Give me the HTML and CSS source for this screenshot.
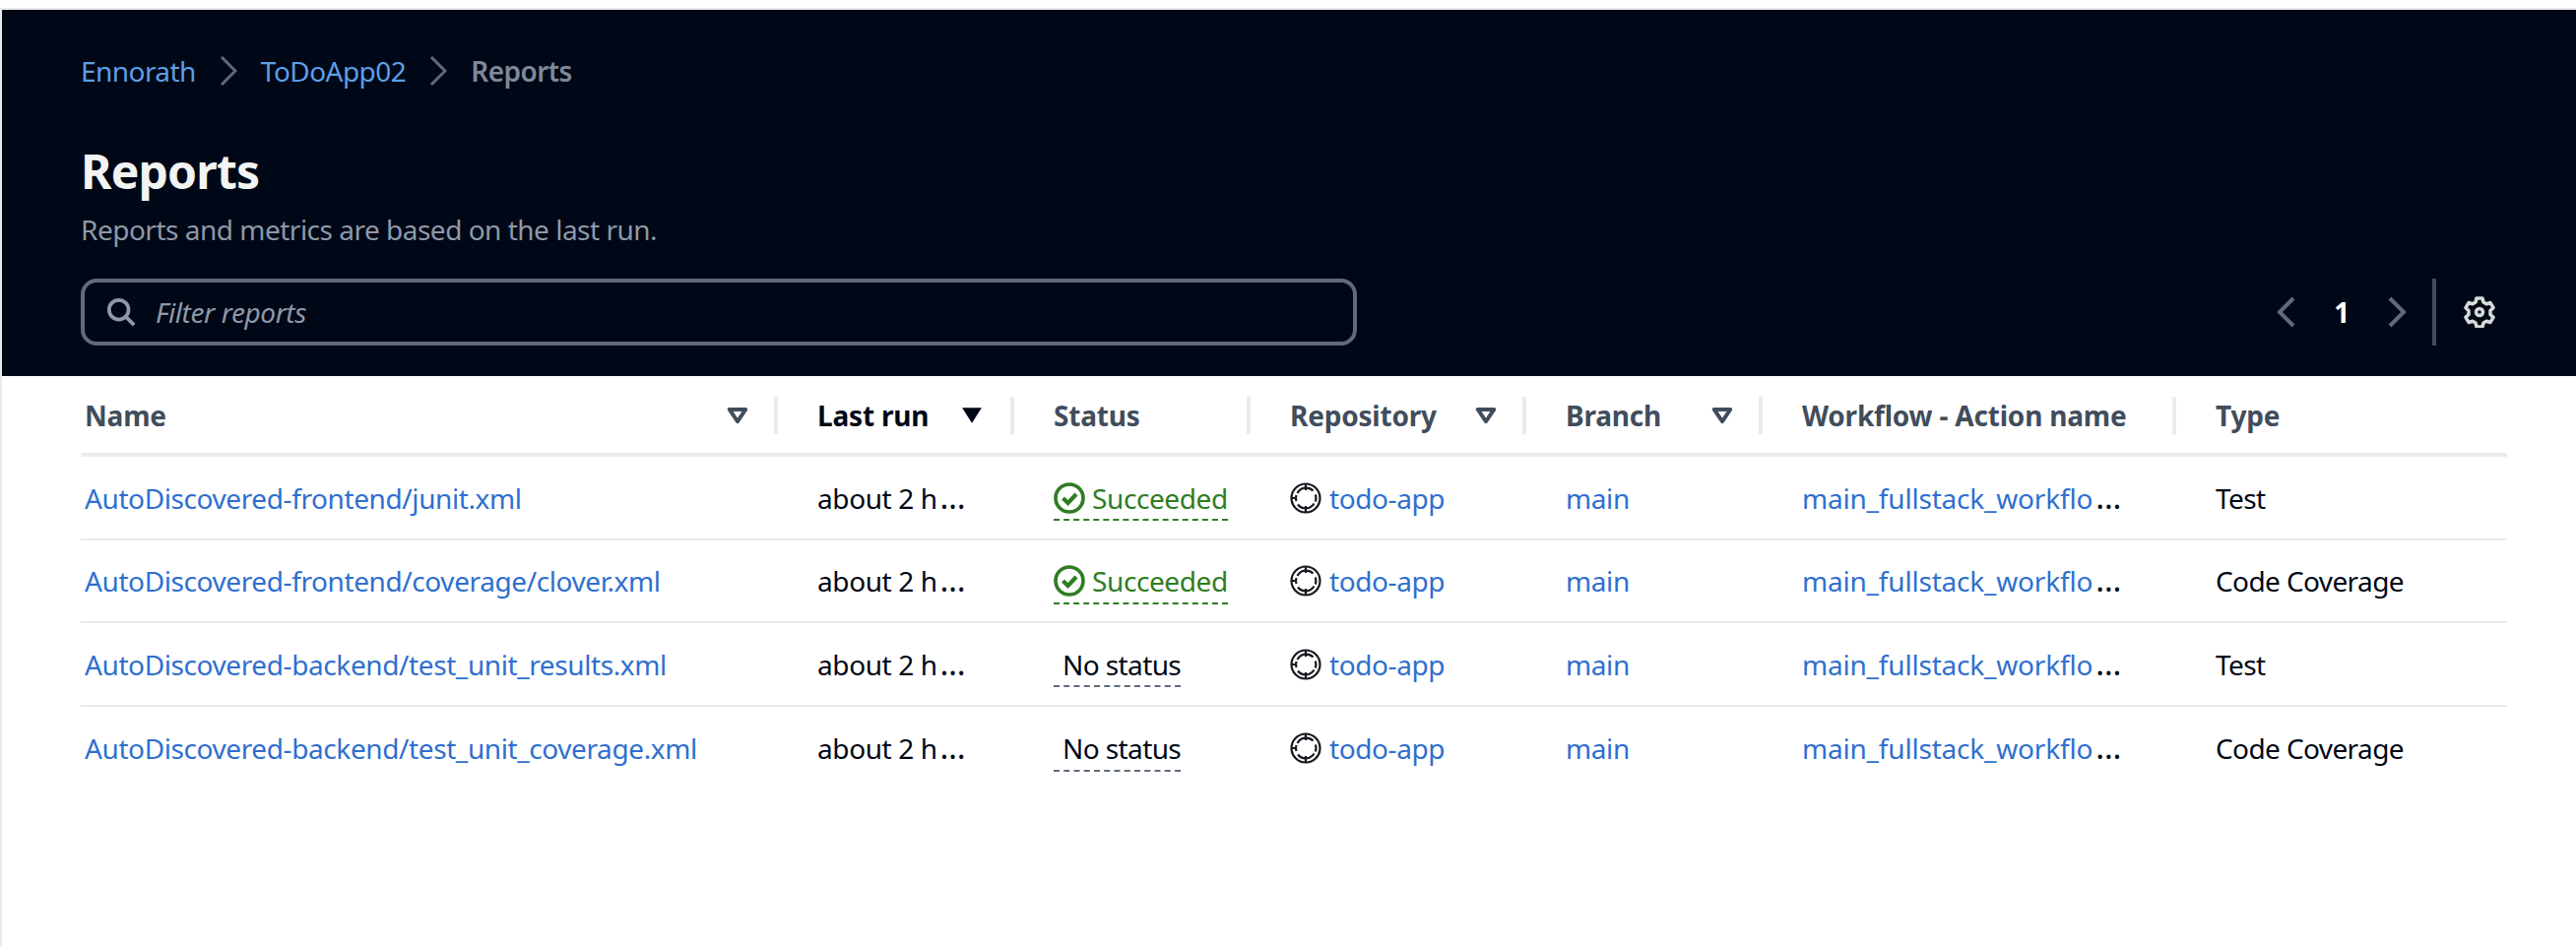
FILE: index.html
```html
<!DOCTYPE html>
<html lang="en">
<head>
<meta charset="utf-8">
<title>Reports</title>
<link rel="stylesheet" href="styles.css">
</head>
<body>
<svg class="defs" width="0" height="0" aria-hidden="true">
  <symbol id="repo" viewBox="0 0 32 32">
    <circle cx="16" cy="16" r="14.5" fill="none" stroke="currentColor" stroke-width="2.2"/>
    <path d="M16 1v7M16 24v7M1 16h4" fill="none" stroke="currentColor" stroke-width="2.2"/>
    <path d="M7.500 11a10 10 0 0 1 16-2.500M24.500 21.500a10 10 0 0 1-16.500 1M6.500 13a10 10 0 0 0 0 6M25.800 12.500a10 10 0 0 1 0 7" fill="none" stroke="currentColor" stroke-width="2.200"/>
  </symbol>
  <symbol id="ok" viewBox="0 0 32 32">
    <circle cx="16" cy="16" r="14" fill="none" stroke="currentColor" stroke-width="3.6"/>
    <path d="M9.500 16l5 5 8.500-9" fill="none" stroke="currentColor" stroke-width="4.200"/>
  </symbol>
  <symbol id="caret" viewBox="0 0 20 16">
    <path d="M2.500 2.500h15L10 13.500z" fill="none" stroke="currentColor" stroke-width="3.600" stroke-linejoin="round"/>
  </symbol>
  <symbol id="caret-solid" viewBox="0 0 20 16">
    <path d="M1 1h18L10 15z" fill="currentColor"/>
  </symbol>
</svg>
<div class="page">
  <header class="hero">
    <nav class="crumbs">
      <a class="crumb-link">Ennorath</a>
      <svg class="crumb-sep" viewBox="0 0 18 30"><path d="M2 1l14 14L2 29"/></svg>
      <a class="crumb-link">ToDoApp02</a>
      <svg class="crumb-sep" viewBox="0 0 18 30"><path d="M2 1l14 14L2 29"/></svg>
      <span class="crumb-current">Reports</span>
    </nav>
    <h1 class="title">Reports</h1>
    <p class="subtitle">Reports and metrics are based on the last run.</p>
    <div class="tools">
      <div class="filter">
        <svg class="search-icon" viewBox="0 0 32 32"><circle cx="13.500" cy="13.500" r="10.500"/><path d="M21 21l9 9"/></svg>
        <span class="filter-text">Filter reports</span>
      </div>
      <div class="pager">
        <svg class="pager-arrow" viewBox="0 0 20 32"><path d="M17 2L3 16l14 14"/></svg>
        <span class="pager-num">1</span>
        <svg class="pager-arrow" viewBox="0 0 20 32"><path d="M3 2l14 14L3 30"/></svg>
        <span class="pager-div"></span>
        <svg class="gear" viewBox="0 0 32 32"><path d="M13 2h6l1 4 3 1.700 4-1.200 3 5.200-3 2.900v3.800l3 2.900-3 5.200-4-1.200-3 1.700-1 4h-6l-1-4-3-1.700-4 1.200-3-5.200 3-2.900v-3.800l-3-2.900 3-5.200 4 1.200 3-1.700z"/><circle cx="16" cy="16" r="3.500"/></svg>
      </div>
    </div>
  </header>
  <main class="table">
    <div class="row head">
      <div class="cell name">Name<svg class="caret"><use href="#caret"/></svg></div>
      <div class="cell sorted">Last run<svg class="caret"><use href="#caret-solid"/></svg></div>
      <div class="cell">Status</div>
      <div class="cell">Repository<svg class="caret"><use href="#caret"/></svg></div>
      <div class="cell">Branch<svg class="caret"><use href="#caret"/></svg></div>
      <div class="cell">Workflow - Action name</div>
      <div class="cell last">Type</div>
    </div>
    <div class="row">
      <div class="cell name"><a class="link">AutoDiscovered-frontend/junit.xml</a></div>
      <div class="cell"><span>about 2 h<span class="dots">…</span></span></div>
      <div class="cell"><span class="status ok"><svg class="ok-icon"><use href="#ok"/></svg>Succeeded</span></div>
      <div class="cell"><svg class="repo-icon"><use href="#repo"/></svg><a class="link">todo-app</a></div>
      <div class="cell"><a class="link">main</a></div>
      <div class="cell"><span><a class="link wf">main_fullstack_workflo</a><span class="dots">…</span></span></div>
      <div class="cell last">Test</div>
    </div>
    <div class="row">
      <div class="cell name"><a class="link">AutoDiscovered-frontend/coverage/clover.xml</a></div>
      <div class="cell"><span>about 2 h<span class="dots">…</span></span></div>
      <div class="cell"><span class="status ok"><svg class="ok-icon"><use href="#ok"/></svg>Succeeded</span></div>
      <div class="cell"><svg class="repo-icon"><use href="#repo"/></svg><a class="link">todo-app</a></div>
      <div class="cell"><a class="link">main</a></div>
      <div class="cell"><span><a class="link wf">main_fullstack_workflo</a><span class="dots">…</span></span></div>
      <div class="cell last">Code Coverage</div>
    </div>
    <div class="row">
      <div class="cell name"><a class="link">AutoDiscovered-backend/test_unit_results.xml</a></div>
      <div class="cell"><span>about 2 h<span class="dots">…</span></span></div>
      <div class="cell"><span class="status none">No status</span></div>
      <div class="cell"><svg class="repo-icon"><use href="#repo"/></svg><a class="link">todo-app</a></div>
      <div class="cell"><a class="link">main</a></div>
      <div class="cell"><span><a class="link wf">main_fullstack_workflo</a><span class="dots">…</span></span></div>
      <div class="cell last">Test</div>
    </div>
    <div class="row">
      <div class="cell name"><a class="link">AutoDiscovered-backend/test_unit_coverage.xml</a></div>
      <div class="cell"><span>about 2 h<span class="dots">…</span></span></div>
      <div class="cell"><span class="status none">No status</span></div>
      <div class="cell"><svg class="repo-icon"><use href="#repo"/></svg><a class="link">todo-app</a></div>
      <div class="cell"><a class="link">main</a></div>
      <div class="cell"><span><a class="link wf">main_fullstack_workflo</a><span class="dots">…</span></span></div>
      <div class="cell last">Code Coverage</div>
    </div>
  </main>
</div>
</body>
</html>
```
FILE: styles.css
```css
* { box-sizing: border-box; }
html, body { margin: 0; height: 100%; background: #fff; }
body { padding-top: 8px; font-family: "Noto Sans", "Open Sans", sans-serif; font-size: 28px; letter-spacing: -0.4px; color: #000716; overflow: hidden; }
.defs { position: absolute; }
.page { height: 954px; border-top: 2px solid #e9ebed; border-left: 2px solid #e9ebed; }

.hero { height: 372px; background: #000716; padding: 43px 80px 0; }
.crumbs { display: flex; align-items: center; height: 38px; letter-spacing: -0.55px; }
.crumb-link { color: #5c9fe6; }
.crumb-current { color: #7d8998; font-weight: 600; }
.crumb-sep { width: 18px; height: 30px; margin: 0 24px; fill: none; stroke: #5f6b7a; stroke-width: 3; }
.title { margin: 53px 0 0; font-size: 48px; letter-spacing: -0.8px; line-height: 60px; font-weight: 700; color: #f2f3f3; }
.subtitle { margin: 9px 0 0; line-height: 40px; letter-spacing: -0.5px; color: #8d99a8; }
.tools { display: flex; align-items: center; justify-content: space-between; margin-top: 30px; padding-right: 2px; }
.filter { width: 1296px; height: 68px; display: flex; align-items: center; gap: 20px; padding-left: 22px; border: 4px solid #5f6b7a; border-radius: 16px; }
.search-icon { width: 30px; height: 30px; fill: none; stroke: #8d99a8; stroke-width: 4; }
.filter-text { font-style: italic; color: #8d99a8; }
.pager { display: flex; align-items: center; }
.pager-arrow { width: 20px; height: 32px; fill: none; stroke: #5f6b7a; stroke-width: 4; }
.pager-num { width: 92px; text-align: center; font-weight: 700; color: #fff; }
.pager-div { width: 4px; height: 68px; margin: 0 28px 0 26px; background: #414d5c; }
.gear { width: 32px; height: 32px; fill: none; stroke: #d5dbdb; stroke-width: 3.500; stroke-linejoin: round; }

.table { margin-left: 80px; width: 2464px; }
.row { display: grid; grid-template-columns: 708px 240px 240px 280px 240px 420px 336px; align-items: center; height: 84.5px; padding-top: 1px; border-bottom: 2px solid #e9ebed; }
.row:last-child { border-bottom: 0; }
.cell { display: flex; align-items: center; min-width: 0; padding: 0 40px; white-space: nowrap; }
.cell.name { padding-left: 4px; }
.cell.last { letter-spacing: -0.6px; }
.head { height: 82px; padding-top: 2px; border-bottom: 4px solid #e9ebed; color: #414d5c; font-weight: 700; letter-spacing: -0.2px; }
.head .cell { height: 38px; justify-content: space-between; border-right: 4px solid #e9ebed; padding-right: 26px; }
.head .cell.last { border-right: 0; letter-spacing: -0.2px; }
.head .sorted { color: #000716; padding-right: 28px; }
.caret { width: 22px; height: 18px; flex: none; color: #414d5c; }
.sorted .caret { color: #000716; }
.link { color: #2f6fcf; }
.wf { letter-spacing: -0.2px; }
.dots { margin-left: 3px; font-size: 33px; line-height: 1; }
.status { display: inline-flex; align-items: center; gap: 7px; height: 47px; padding-top: 2px; border-bottom: 2px dashed #5f6b7a; }
.status.ok { color: #2e7d22; border-bottom-color: #2e7d22; }
.status.none { padding: 2px 0 0 9px; letter-spacing: -0.6px; }
.ok-icon { width: 32px; height: 32px; flex: none; }
.repo-icon { width: 32px; height: 32px; flex: none; margin-right: 8px; color: #16191f; }
```
